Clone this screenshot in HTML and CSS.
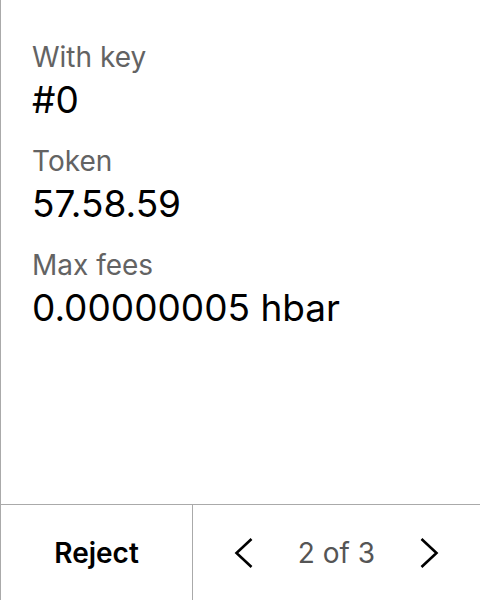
FILE: index.html
```html
<!DOCTYPE html>
<html>
<head>
<meta charset="utf-8">
<link rel="stylesheet" href="styles.css">
</head>
<body>
<div class="screen">
  <main class="content">
    <div class="field">
      <div class="label">With key</div>
      <div class="value">#0</div>
    </div>
    <div class="field">
      <div class="label">Token</div>
      <div class="value">57.58.59</div>
    </div>
    <div class="field">
      <div class="label">Max fees</div>
      <div class="value">0.00000005 hbar</div>
    </div>
  </main>
  <footer class="footer">
    <div class="reject">Reject</div>
    <div class="pager">
      <svg class="chev" width="32" height="32" viewBox="0 0 32 32"><path d="M23.5 2 L8.5 16 L23.5 30" fill="none" stroke="#000" stroke-width="2.6"/></svg>
      <span class="count">2 of 3</span>
      <svg class="chev" width="32" height="32" viewBox="0 0 32 32"><path d="M8.5 2 L23.5 16 L8.5 30" fill="none" stroke="#000" stroke-width="2.6"/></svg>
    </div>
  </footer>
</div>
</body>
</html>
```
FILE: styles.css
```css
html, body {
  margin: 0;
  padding: 0;
  background: #fff;
}
body {
  font-family: Inter, "Noto Sans", sans-serif;
  width: 480px;
  height: 600px;
  overflow: hidden;
}
.screen {
  display: flex;
  flex-direction: column;
  height: 600px;
  border-left: 1px solid #aaa;
  box-sizing: border-box;
}
.content {
  flex: 1;
  padding: 40px 0 0 31px;
  display: flex;
  flex-direction: column;
  gap: 22px;
}
.field {
  display: flex;
  flex-direction: column;
  gap: 4px;
}
.label {
  font-size: 28px;
  line-height: 34px;
  color: #636363;
}
.value {
  font-size: 37px;
  line-height: 44px;
  color: #000;
}
.footer {
  height: 96px;
  border-top: 1px solid #aaa;
  display: flex;
  box-sizing: border-box;
}
.reject {
  width: 191px;
  border-right: 1px solid #aaa;
  display: flex;
  align-items: center;
  justify-content: center;
  font-size: 28px;
  font-weight: 600;
  color: #000;
}
.pager {
  flex: 1;
  display: flex;
  align-items: center;
  justify-content: center;
  gap: 38px;
}
.count {
  font-size: 28px;
  color: #555;
}
.chev {
  display: block;
}
```
